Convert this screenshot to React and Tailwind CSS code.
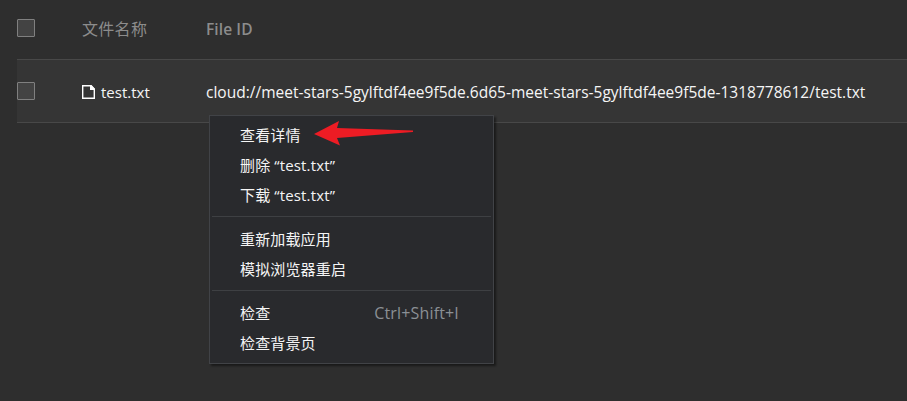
const cjk = "font-['Open_Sans','Noto_Sans_CJK_SC',sans-serif]";

function Checkbox() {
  return <span className="block h-[18px] w-[18px] rounded-[1px] border border-[#808080] bg-[#434343]" />;
}

function FileIcon() {
  return (
    <svg width="14" height="14" viewBox="0 0 14 14" className="shrink-0">
      <path d="M0.7 0.7H9.2L12.3 4V13.3H0.7Z" fill="none" stroke="#fff" strokeWidth="1.4" />
      <path d="M8 0V5H13V4L9 0Z" fill="#fff" />
    </svg>
  );
}

function Item({ children, shortcut }) {
  return (
    <li className="flex h-[30px] items-center justify-between pl-[30px] pr-[34px] whitespace-nowrap">
      <span className="tracking-[0.15px]">{children}</span>
      {shortcut && <span className="text-[16px] text-[#8b9095] tracking-[0.16px]">{shortcut}</span>}
    </li>
  );
}

function Separator() {
  return <li className="mx-[2px] mt-[6px] mb-[7px] h-px bg-[#3e4043]" />;
}

function Arrow() {
  return (
    <svg width="100" height="26" viewBox="0 0 100 26" className="absolute left-[104px] top-[5px]">
      <path d="M0 13L25 0L23 7L99 9.4V11L23 17L26 24.5Z" fill="#ed1c24" />
    </svg>
  );
}

export default function App() {
  return (
    <div className={`relative h-[401px] w-[907px] overflow-hidden bg-[#2e2e2e] pl-[17px] text-[15px] leading-[20px] text-[#f5f5f5] ${cjk}`}>
      <div className="flex h-[59px] items-center pb-[2px] text-[#8c8c8c]">
        <div className="w-[65px] pb-[2px]"><Checkbox /></div>
        <div className="w-[124px] text-[16px] tracking-[0.3px]">文件名称</div>
        <div className="text-[15.5px] font-semibold tracking-[0.1px]">File ID</div>
      </div>
      <div className="flex h-[64px] items-center border-y border-[#484848] bg-[#353535]">
        <div className="w-[65px]"><Checkbox /></div>
        <div className="flex w-[124px] items-center gap-[5px] pt-[2px]">
          <FileIcon />
          <span>test.txt</span>
        </div>
        <div className="pt-[2px] text-[15.5px] whitespace-nowrap tracking-[0.01px]">
          cloud://meet-stars-5gylftdf4ee9f5de.6d65-meet-stars-5gylftdf4ee9f5de-1318778612/test.txt
        </div>
      </div>
      <ul className="absolute left-[209px] top-[115px] h-[249px] w-[285px] border border-[#414347] bg-[#292a2d] pt-[4px] shadow-[2px_2px_2px_rgba(0,0,0,0.45)]">
        <Item>查看详情</Item>
        <Item>删除 “test.txt”</Item>
        <Item>下载 “test.txt”</Item>
        <Separator />
        <Item>重新加载应用</Item>
        <Item>模拟浏览器重启</Item>
        <Separator />
        <Item shortcut="Ctrl+Shift+I">检查</Item>
        <Item>检查背景页</Item>
        <Arrow />
      </ul>
    </div>
  );
}
